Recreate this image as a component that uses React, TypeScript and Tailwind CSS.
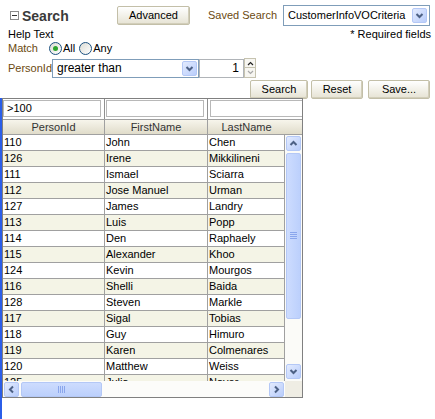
const rows: [string, string, string][] = [
  ["110", "John", "Chen"],
  ["126", "Irene", "Mikkilineni"],
  ["111", "Ismael", "Sciarra"],
  ["112", "Jose Manuel", "Urman"],
  ["127", "James", "Landry"],
  ["113", "Luis", "Popp"],
  ["114", "Den", "Raphaely"],
  ["115", "Alexander", "Khoo"],
  ["124", "Kevin", "Mourgos"],
  ["116", "Shelli", "Baida"],
  ["128", "Steven", "Markle"],
  ["117", "Sigal", "Tobias"],
  ["118", "Guy", "Himuro"],
  ["119", "Karen", "Colmenares"],
  ["120", "Matthew", "Weiss"],
  ["125", "Julia", "Nayer"],
];

function Chevron({ dir, color = "#4d6185" }: { dir: "up" | "down" | "left" | "right"; color?: string }) {
  const d = {
    up: "M1.5 6 L4.5 3 L7.5 6",
    down: "M1.5 3 L4.5 6 L7.5 3",
    left: "M6 1.5 L3 4.5 L6 7.5",
    right: "M3 1.5 L6 4.5 L3 7.5",
  }[dir];
  return (
    <svg width="9" height="9" viewBox="0 0 9 9">
      <path d={d} stroke={color} strokeWidth="2" fill="none" />
    </svg>
  );
}

function BlueBtn({ dir, className = "" }: { dir: "up" | "down" | "left" | "right"; className?: string }) {
  return (
    <div className={"w-[15px] h-[15px] rounded-[2px] border border-[#b4c8f6] bg-linear-to-br from-[#e3ebfe] to-[#b9cdfb] flex items-center justify-center " + className}>
      <Chevron dir={dir} />
    </div>
  );
}

function XpButton({ label, className = "" }: { label: string; className?: string }) {
  return (
    <div className={"h-[19px] flex items-center justify-center rounded-[2px] border border-[#c3bfa8] bg-linear-to-b from-white to-[#e6e3d4] shadow-[inset_-1px_-1px_0_#d2ceba] text-[11px] text-black " + className}>
      {label}
    </div>
  );
}

function Radio({ on }: { on?: boolean }) {
  return (
    <div className="w-[13px] h-[13px] rounded-full border border-[#1c5180] bg-linear-to-br from-[#dcdcd4] to-white flex items-center justify-center">
      {on && <div className="w-[5px] h-[5px] rounded-full bg-[#2fa52f]" />}
    </div>
  );
}

export default function App() {
  return (
    <div className="w-[435px] h-[419px] bg-white overflow-hidden flex flex-col text-[11px] text-black" style={{ fontFamily: '"Liberation Sans", Arial, sans-serif' }}>
      {/* header row */}
      <div className="flex items-center h-[21px] mt-[5px]">
        <div className="w-[117px] flex items-center pl-[10px]">
          <div className="w-[9px] h-[9px] border border-[#8c8c8c] bg-white flex items-center justify-center">
            <div className="w-[5px] h-px bg-[#333]" />
          </div>
          <span className="ml-[3px] text-[14px] font-bold text-[#3a3a3a] leading-none">Search</span>
        </div>
        <XpButton label="Advanced" className="w-[73px]" />
        <span className="ml-[18px] w-[75px] text-[#6b4a10]">Saved Search</span>
        <div className="w-[147px] h-[21px] border border-[#7f9db9] flex items-center justify-between pl-[4px] pr-[2px]">
          <span>CustomerInfoVOCriteria</span>
          <BlueBtn dir="down" />
        </div>
      </div>

      <div className="flex justify-between h-[14px] mt-[1px] pl-[8px] pr-[4px] leading-[14px]">
        <span>Help Text</span>
        <span>* Required fields</span>
      </div>

      <div className="flex items-center h-[14px] pl-[8px]">
        <span className="w-[41px] text-[#6b4a10]">Match</span>
        <Radio on />
        <span className="ml-px">All</span>
        <div className="ml-[4px]"><Radio /></div>
        <span className="ml-px">Any</span>
      </div>

      <div className="flex items-center h-[20px] mt-[3px] pl-[8px]">
        <span className="w-[44px] text-[#6b4a10]">PersonId</span>
        <div className="w-[147px] h-[19px] border border-[#7f9db9] flex items-center justify-between pl-[4px] pr-px">
          <span className="text-[12px]">greater than</span>
          <BlueBtn dir="down" />
        </div>
        <div className="w-[45px] h-[19px] border border-[#b0b4b8] flex items-center justify-end pr-[4px] text-[12px]">1</div>
        <div className="flex flex-col w-[12px] h-[20px]">
          <div className="h-[10px] border border-[#c6c3b0] bg-[#f7f6f1] flex items-center justify-center">
            <svg width="7" height="5" viewBox="0 0 7 5"><path d="M1 4 L3.5 1.5 L6 4" stroke="#222" strokeWidth="1.2" fill="none" /></svg>
          </div>
          <div className="h-[10px] border border-t-0 border-[#c6c3b0] bg-[#f7f6f1] flex items-center justify-center">
            <svg width="7" height="5" viewBox="0 0 7 5"><path d="M1 1 L3.5 3.5 L6 1" stroke="#a8a8a8" strokeWidth="1.2" fill="none" /></svg>
          </div>
        </div>
      </div>

      <div className="flex justify-end gap-[3px] h-[18px] mt-[2px] pr-[5px]">
        <XpButton label="Search" className="w-[58px] h-[18px]" />
        <XpButton label="Reset" className="w-[52px] h-[18px]" />
        <XpButton label="Save..." className="w-[62px] h-[18px] ml-[2px]" />
      </div>

      {/* table region */}
      <div className="flex-1 border-l-2 border-[#2b5ee8]">
        <div className="w-[301px] border border-[#808080] bg-white">
          {/* filter row */}
          <div className="flex h-[20px] bg-white overflow-hidden">
            <div className="w-[102px] shrink-0 border-r border-[#909090] py-[1px] pr-[3px]">
              <div className="h-[17px] border border-[#b8b8b8] pl-[3px] flex items-center">&gt;100</div>
            </div>
            <div className="w-[103px] shrink-0 border-r border-[#909090] py-[1px] pl-px pr-[3px]">
              <div className="h-[17px] border border-[#b8b8b8]" />
            </div>
            <div className="w-[120px] shrink-0 py-[1px] pl-[2px]">
              <div className="h-[17px] border border-[#b8b8b8]" />
            </div>
          </div>
          {/* header */}
          <div className="flex h-[16px] bg-linear-to-b from-[#f7f5ec] to-[#e0dcca] border-y border-[#a0a0a0] text-[#333] leading-[14px]">
            <div className="w-[102px] border-r border-[#a0a0a0] text-center">PersonId</div>
            <div className="w-[103px] border-r border-[#a0a0a0] text-center">FirstName</div>
            <div className="w-[77px] text-center">LastName</div>
            <div className="w-[17px]" />
          </div>
          {/* body */}
          <div className="flex">
            <div className="w-[282px] flex flex-col">
              <div className="h-[246px] overflow-hidden">
                {rows.map((r, i) => (
                  <div key={r[0]} className={"flex h-[16px] border-b border-[#a0a0a0] leading-[15px] " + (i % 2 ? "bg-[#f4f4e6]" : "bg-white")}>
                    <div className="w-[102px] border-r border-[#a0a0a0] pl-px">{r[0]}</div>
                    <div className="w-[103px] border-r border-[#a0a0a0] pl-px">{r[1]}</div>
                    <div className="w-[77px] border-r border-[#a0a0a0] pl-px">{r[2]}</div>
                  </div>
                ))}
              </div>
              <div className="h-[16px] flex items-center px-px bg-[#fcfcfa]">
                <BlueBtn dir="left" />
                <div className="ml-[2px] w-[81px] h-[15px] rounded-[2px] border border-[#b4c8f6] bg-linear-to-b from-[#cddcfe] to-[#bcd0fc] flex items-center justify-center">
                  <svg width="8" height="7" viewBox="0 0 8 7">
                    <path d="M0.5 0 V7 M2.5 0 V7 M4.5 0 V7 M6.5 0 V7" stroke="#8aa6ec" strokeWidth="1" />
                  </svg>
                </div>
                <div className="flex-1" />
                <BlueBtn dir="right" />
              </div>
            </div>
            <div className="w-[17px] flex flex-col">
              <div className="h-[246px] bg-[#fbfbf8] flex flex-col items-center pt-px">
                <BlueBtn dir="up" />
                <div className="mt-[2px] w-[15px] h-[166px] rounded-[2px] border border-[#b4c8f6] bg-linear-to-r from-[#cddcfe] to-[#bcd0fc] flex items-center justify-center">
                  <svg width="7" height="8" viewBox="0 0 7 8">
                    <path d="M0 0.5 H7 M0 2.5 H7 M0 4.5 H7 M0 6.5 H7" stroke="#8aa6ec" strokeWidth="1" />
                  </svg>
                </div>
                <div className="flex-1" />
                <BlueBtn dir="down" className="mb-[2px]" />
              </div>
              <div className="h-[16px] bg-[#efede4]" />
            </div>
          </div>
        </div>
      </div>
    </div>
  );
}
